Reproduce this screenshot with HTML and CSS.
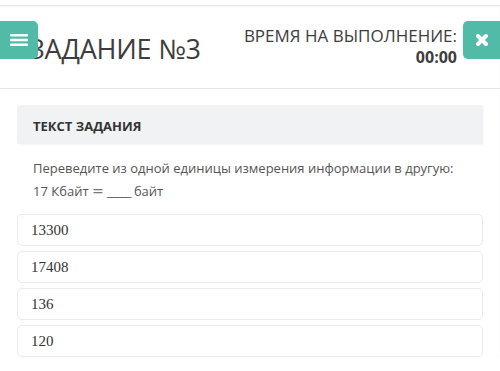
FILE: index.html
```html
<!DOCTYPE html>
<html lang="ru">
<head>
<meta charset="utf-8">
<link rel="stylesheet" href="styles.css">
</head>
<body>
<div class="page">
  <header class="header">
    <h1 class="title">ЗАДАНИЕ №3</h1>
    <button class="menu-btn" aria-label="menu">
      <svg width="18" height="12" viewBox="0 0 18 12"><rect x="0" y="0" width="18" height="2.6" rx="1" fill="#fff"/><rect x="0" y="4.7" width="18" height="2.6" rx="1" fill="#fff"/><rect x="0" y="9.4" width="18" height="2.6" rx="1" fill="#fff"/></svg>
    </button>
    <div class="right">
      <div class="timer">
        <div class="timer-label">ВРЕМЯ НА ВЫПОЛНЕНИЕ:</div>
        <div class="timer-value">00:00</div>
      </div>
      <button class="close-btn" aria-label="close">
        <svg width="14" height="14" viewBox="0 0 14 14"><path d="M3 3 L11 11 M11 3 L3 11" stroke="#fff" stroke-width="4" stroke-linecap="round"/></svg>
      </button>
    </div>
  </header>
  <main class="content">
    <div class="task-head">ТЕКСТ ЗАДАНИЯ</div>
    <p class="task-text">Переведите из одной единицы измерения информации в другую:<br>17 Кбайт <span class="eq">=</span> <span class="blank">_____</span> байт</p>
    <div class="options">
      <div class="option">13300</div>
      <div class="option">17408</div>
      <div class="option">136</div>
      <div class="option">120</div>
    </div>
  </main>
</div>
</body>
</html>
```
FILE: styles.css
```css
html, body {
  margin: 0;
  padding: 0;
  background: #fff;
}
.page {
  font-family: "Open Sans", "Noto Sans", sans-serif;
  border-top: 1px solid #e4e4e4;
  margin-top: 5px;
  box-shadow: inset 0 1px 2px rgba(0,0,0,0.04);
}
.header {
  position: relative;
  display: flex;
  justify-content: space-between;
  align-items: flex-start;
  height: 82px;
  border-bottom: 1px solid #e6e6e6;
}
.title {
  margin: 24px 0 0 29px;
  font-size: 27px;
  font-weight: 400;
  line-height: 38px;
  color: #3d3d3d;
  letter-spacing: -0.2px;
}
.menu-btn {
  position: absolute;
  left: 0;
  top: 15px;
  width: 38px;
  height: 38px;
  border: none;
  border-radius: 0 5px 5px 0;
  background: #52bba8;
  display: flex;
  align-items: center;
  justify-content: center;
  padding: 0;
}
.right {
  display: flex;
  align-items: flex-start;
  gap: 6px;
  margin-top: 15px;
}
.timer {
  text-align: right;
  color: #3d3d3d;
  margin-top: 4px;
}
.timer-label {
  font-size: 17px;
  line-height: 21px;
}
.timer-value {
  font-size: 16px;
  font-weight: 700;
  line-height: 22px;
}
.close-btn {
  width: 37px;
  height: 38px;
  border: none;
  border-radius: 5px 0 0 5px;
  background: #52bba8;
  display: flex;
  align-items: center;
  justify-content: center;
  padding: 0;
}
.content {
  padding: 16px 17px 0 17px;
}
.task-head {
  height: 39px;
  background: #f0f2f3;
  border-radius: 2px;
  padding-left: 16px;
  font-size: 13px;
  font-weight: 700;
  line-height: 42px;
  color: #333;
  box-shadow: 1px 1px 2px rgba(0,0,0,0.04);
}
.task-text {
  margin: 13px 0 0 0;
  padding-left: 16px;
  font-size: 13px;
  line-height: 23px;
  color: #555;
}
.eq {
  font-family: "DejaVu Sans", sans-serif;
  font-size: 14px;
  color: #777;
}
.blank {
  letter-spacing: -1px;
}
.options {
  display: flex;
  flex-direction: column;
  gap: 5px;
  margin-top: 11px;
}
.option {
  height: 30px;
  border: 1px solid #e9eaea;
  border-radius: 5px;
  padding-left: 13px;
  font-family: "Liberation Serif", "Times New Roman", serif;
  font-size: 15px;
  line-height: 30px;
  color: #333;
}
```
